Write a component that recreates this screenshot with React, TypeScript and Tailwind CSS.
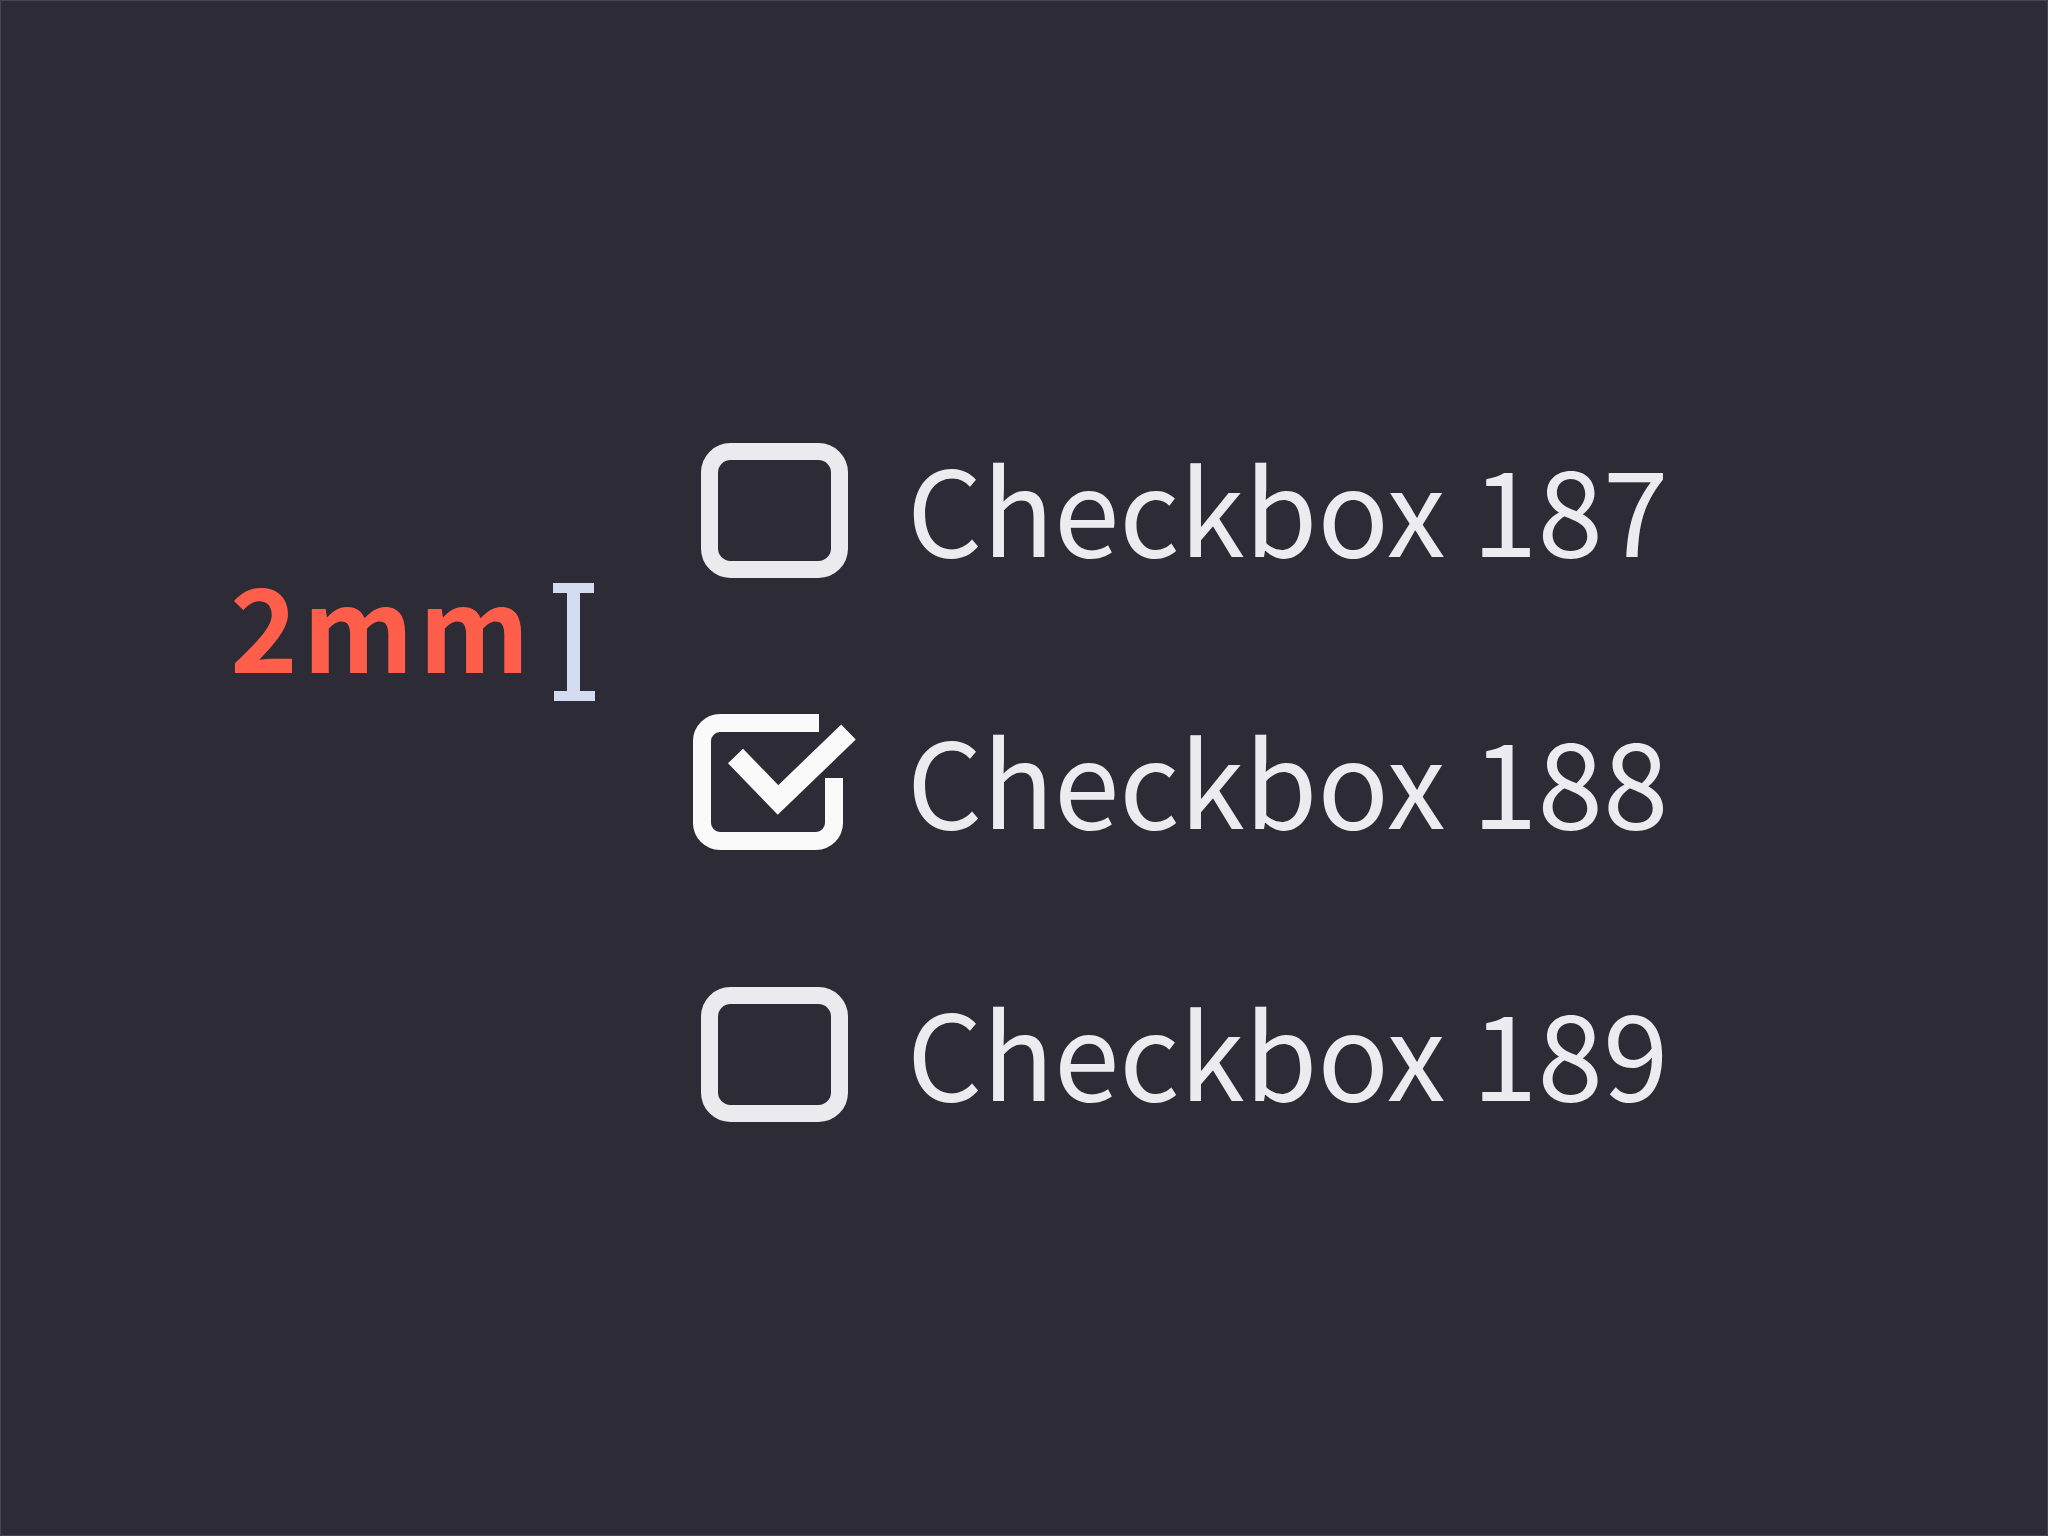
const sans = { fontFamily: '"Noto Sans CJK SC", "Noto Sans", sans-serif' };

// Empty checkbox outline
function BoxIcon() {
  return (
    <svg width="170" height="160" viewBox="0 0 170 160" className="shrink-0">
      <rect x="18.5" y="20.5" width="130" height="118" rx="21" fill="none" stroke="#ebebef" strokeWidth="17" />
    </svg>
  );
}

// Checked checkbox: open frame with a tick breaking out of the top-right corner
function CheckedIcon() {
  return (
    <svg width="170" height="160" viewBox="0 0 170 160" className="shrink-0">
      <path
        d="M128 20 H29 A18 18 0 0 0 11 38 V120 A18 18 0 0 0 29 138 H125 A18 18 0 0 0 143 120 V75"
        fill="none"
        stroke="#fafafa"
        strokeWidth="18"
      />
      <path
        d="M44.5 53 L87 97 L157.5 29"
        fill="none"
        stroke="#fafafa"
        strokeWidth="21"
        strokeLinejoin="miter"
      />
    </svg>
  );
}

function Row({ label, checked }: { label: string; checked?: boolean }) {
  return (
    <div className="flex h-[272px] items-center">
      {checked ? <CheckedIcon /> : <BoxIcon />}
      <span className="ml-[46px] pb-[11px] text-[118px] leading-none text-[#ececf0]" style={sans}>
        {label}
      </span>
    </div>
  );
}

export default function App() {
  return (
    <div className="flex h-[1536px] w-[2048px] border border-[#46444e] bg-[#2d2b35]">
      <div className="flex w-[690px] shrink-0 items-start pl-[229px] pt-[565px]">
        <span className="text-[115px] font-bold leading-none tracking-[5px] text-[#ff5f4a]" style={sans}>
          2mm
        </span>
        {/* text cursor */}
        <svg width="42" height="118" viewBox="0 0 42 118" className="ml-[18px] mt-[17px] shrink-0">
          <rect x="0" y="0" width="41" height="10" fill="#d3dcf0" />
          <rect x="14" y="0" width="13" height="118" fill="#d3dcf0" />
          <rect x="1" y="108" width="41" height="10" fill="#d3dcf0" />
        </svg>
      </div>
      <div className="flex flex-col pt-[374px]">
        <Row label="Checkbox 187" />
        <Row label="Checkbox 188" checked />
        <Row label="Checkbox 189" />
      </div>
    </div>
  );
}
